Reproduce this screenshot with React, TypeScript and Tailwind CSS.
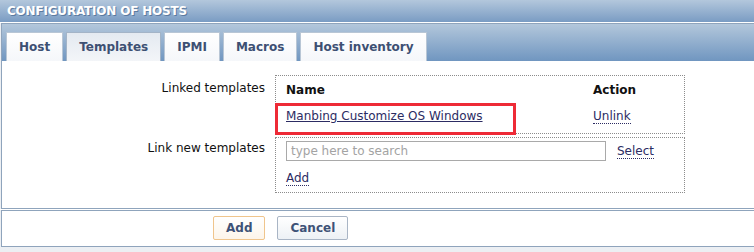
import React from 'react';

const tabs = [
  { name: 'Host', active: false },
  { name: 'Templates', active: true },
  { name: 'IPMI', active: false },
  { name: 'Macros', active: false },
  { name: 'Host inventory', active: false },
];

const DottedLink = ({ children }: { children: React.ReactNode }) => (
  <a href="#" className="text-[#2c2c63] border-b border-dotted border-[#2c2c63] leading-[14px] no-underline">
    {children}
  </a>
);

const App = () => {
  return (
    <div className="w-[754px] h-[252px] overflow-hidden bg-[#eceff3] font-['DejaVu_Sans',Verdana,sans-serif] text-[12px] text-[#111]">
      {/* header */}
      <div className="h-[22px] bg-gradient-to-b from-[#b3c7dc] to-[#7a9cc3] flex items-center pl-[7px]">
        <span className="font-bold text-white [text-shadow:1px_1px_0_#5b7aa0] tracking-[-0.2px]">
          CONFIGURATION OF HOSTS
        </span>
      </div>
      <div className="h-[1px] bg-white" />

      {/* panel */}
      <div className="ml-px bg-white border-l border-t border-b border-[#8fa4bc]">
        <div className="h-[37px] pt-[8px] pl-[4px] flex items-end gap-[3px] bg-gradient-to-b from-[#b3c7db] to-[#7096c0]">
          {tabs.map((tab) => (
            <div
              key={tab.name}
              className={
                tab.active
                  ? 'h-[29px] px-3 flex items-center font-bold text-[#3d5073] border border-b-0 border-[#a3b4c7] bg-gradient-to-b from-[#e4eaf1] to-[#f3f5f8]'
                  : 'h-[29px] px-3 flex items-center font-bold text-[#3d5073] border border-b-0 border-[#b8c6d5] bg-gradient-to-b from-white to-[#f5f7fa]'
              }
            >
              {tab.name}
            </div>
          ))}
        </div>

        <div className="h-[147px] pt-[14px]">
          {/* linked templates */}
          <div className="flex">
            <div className="w-[263px] text-right pt-[6px] leading-[15px]">Linked templates</div>
            <div className="relative ml-[10px] w-[410px] h-[59px] border border-dotted border-[#8c8c8c]">
              <div className="flex h-[27px] pt-[7px] font-bold leading-[15px]">
                <div className="w-[307px] pl-[10px]">Name</div>
                <div className="pl-[10px]">Action</div>
              </div>
              <div className="flex pt-[6px] leading-[15px]">
                <div className="w-[307px] pl-[10px]">
                  <a href="#" className="text-[#2c2c63] underline">Manbing Customize OS Windows</a>
                </div>
                <div className="pl-[10px]">
                  <DottedLink>Unlink</DottedLink>
                </div>
              </div>
              <div className="absolute left-[-1px] top-[27px] w-[241px] h-[32px] border-[3px] border-[#ee2a36]" />
            </div>
          </div>

          {/* link new templates */}
          <div className="flex mt-[3px]">
            <div className="w-[263px] text-right pt-[4px] leading-[15px]">Link new templates</div>
            <div className="ml-[10px] w-[410px] h-[56px] border border-dotted border-[#8c8c8c] pt-[3px] pl-[10px]">
              <div className="flex items-center">
                <input
                  placeholder="type here to search"
                  className="w-[320px] h-[20px] border border-[#a9a9a9] px-[4px] text-[12px] placeholder:text-[#a3a3a3] outline-none font-['DejaVu_Sans',Verdana,sans-serif]"
                />
                <div className="ml-[11px]">
                  <DottedLink>Select</DottedLink>
                </div>
              </div>
              <div className="mt-[8px]">
                <DottedLink>Add</DottedLink>
              </div>
            </div>
          </div>
        </div>
      </div>

      <div className="h-[1px] bg-white" />

      {/* footer */}
      <div className="ml-px h-[37px] bg-white border-l border-t border-b border-[#8fa4bc] pt-[5px] pl-[211px] flex gap-[12px]">
        <button className="h-[24px] px-[12px] font-bold text-[#3e5277] border border-[#f0c58c] rounded-[2px] bg-gradient-to-b from-white to-[#fdf5ea]">
          Add
        </button>
        <button className="h-[24px] px-[12px] font-bold text-[#3e5277] border border-[#a9b5c5] rounded-[2px] bg-gradient-to-b from-white to-[#edf1f5]">
          Cancel
        </button>
      </div>
    </div>
  );
};

export default App;
